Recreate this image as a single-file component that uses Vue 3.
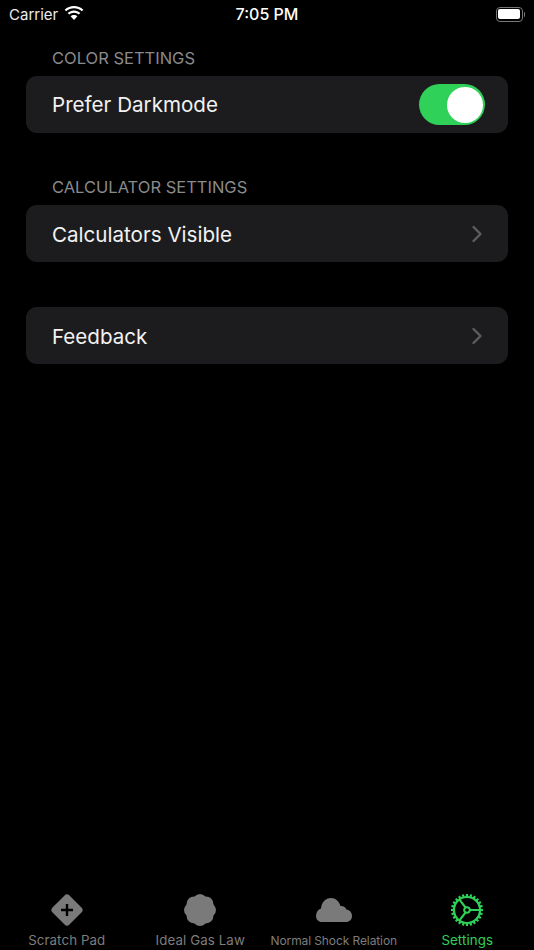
<script setup>
const cx = 17, cy = 17
function polar(r, deg) {
  const a = (deg - 90) * Math.PI / 180
  return `${(cx + r * Math.cos(a)).toFixed(2)} ${(cy + r * Math.sin(a)).toFixed(2)}`
}
const badge = (() => {
  const n = 8
  let d = `M${polar(14.6, -22.5)} `
  for (let i = 0; i < n; i++) {
    const a = i * 45
    d += `Q${polar(18.6, a)} ${polar(14.6, a + 22.5)} `
  }
  return d + 'Z'
})()
const teeth = Array.from({ length: 24 }, (_, i) => i * 15)
const tabs = [
  { label: 'Scratch Pad', icon: 'plus' },
  { label: 'Ideal Gas Law', icon: 'badge' },
  { label: 'Normal Shock Relation', icon: 'cloud', narrow: true },
  { label: 'Settings', icon: 'gear', active: true }
]
</script>

<template>
  <div class="screen">
    <header class="status">
      <div class="status-left">
        <span>Carrier</span>
        <svg class="wifi" viewBox="0 0 20 15" width="20" height="15">
          <path d="M10 2.200c3 0 5.800 1.100 7.900 3.100l1.400-1.600C16.800 1.300 13.500 0 10 0S3.200 1.300.7 3.700l1.400 1.600C4.200 3.300 7 2.200 10 2.200z" fill="#fff"/>
          <path d="M10 6.700c1.800 0 3.500.7 4.800 1.900l1.500-1.600C14.600 5.400 12.400 4.500 10 4.500s-4.600.9-6.300 2.500l1.500 1.600C6.500 7.400 8.200 6.700 10 6.700z" fill="#fff"/>
          <path d="M10 9c-1.300 0-2.500.5-3.400 1.300L10 14l3.400-3.700C12.500 9.500 11.300 9 10 9z" fill="#fff"/>
        </svg>
      </div>
      <span class="time">7:05 PM</span>
      <div class="battery">
        <div class="battery-body"><div class="battery-fill"></div></div>
        <div class="battery-cap"></div>
      </div>
    </header>

    <main class="content">
      <section class="group first">
        <h2 class="label">COLOR SETTINGS</h2>
        <div class="card">
          <span>Prefer Darkmode</span>
          <div class="toggle"><div class="knob"></div></div>
        </div>
      </section>
      <section class="group second">
        <h2 class="label">CALCULATOR SETTINGS</h2>
        <div class="card nudged">
          <span>Calculators Visible</span>
          <svg class="chevron" viewBox="0 0 12 18" width="12" height="18">
            <path d="M2.500 2l7 7-7 7" fill="none" stroke="#5d5d61" stroke-width="2.400" stroke-linecap="round" stroke-linejoin="round"/>
          </svg>
        </div>
      </section>
      <section class="group third">
        <div class="card nudged">
          <span>Feedback</span>
          <svg class="chevron" viewBox="0 0 12 18" width="12" height="18">
            <path d="M2.500 2l7 7-7 7" fill="none" stroke="#5d5d61" stroke-width="2.400" stroke-linecap="round" stroke-linejoin="round"/>
          </svg>
        </div>
      </section>
    </main>

    <nav class="tabs">
      <div v-for="tab in tabs" :key="tab.label" class="tab" :class="{ active: tab.active }">
        <svg class="tab-icon" viewBox="0 0 34 34" width="34" height="34">
          <template v-if="tab.icon === 'plus'">
            <rect x="5" y="5" width="24" height="24" rx="3.500" transform="rotate(45 17 17)" fill="#7a7a7a"/>
            <path d="M17 11v12M11 17h12" stroke="#000" stroke-width="2.400" fill="none"/>
          </template>
          <path v-else-if="tab.icon === 'badge'" :d="badge" fill="#7a7a7a"/>
          <path v-else-if="tab.icon === 'cloud'" d="M5 29H29C32.500 29 35 26.500 35 23C35 19.500 32.500 16.800 29.500 16.500C28.500 14 26 12.600 23.500 13C22 8 18.500 5 14 5C8.500 5 4.500 9.500 4 15.500C1 16.500-1 19.500-1 23C-1 26.500 1.500 29 5 29Z" fill="#7a7a7a"/>
          <g v-else fill="none" stroke="#30d158">
            <circle cx="17" cy="17" r="13" stroke-width="2.200"/>
            <line v-for="t in teeth" :key="t" x1="17" y1="1" x2="17" y2="4" stroke-width="2.200" :transform="`rotate(${t} 17 17)`"/>
            <circle cx="17" cy="17" r="2.800" stroke-width="2"/>
            <path d="M19.800 17H30M15.600 14.600L9.300 6.300M15.600 19.400L9.300 27.700" stroke-width="2.200"/>
          </g>
        </svg>
        <span class="tab-label" :class="{ narrow: tab.narrow }">{{ tab.label }}</span>
      </div>
    </nav>
  </div>
</template>

<style scoped>
.screen {
  width: 534px;
  height: 950px;
  background: #000;
  color: #fff;
  display: flex;
  flex-direction: column;
  overflow: hidden;
  font-family: Inter, "Liberation Sans", sans-serif;
}
.status {
  height: 28px;
  display: grid;
  grid-template-columns: 1fr auto 1fr;
  align-items: center;
  padding: 0 9px 0 9px;
  font-size: 15px;
  flex: none;
}
.status-left {
  display: flex;
  align-items: center;
  gap: 6px;
  color: #ececec;
}
.wifi { margin-top: -1px; }
.time { font-weight: 500; font-size: 16px; }
.battery {
  justify-self: end;
  display: flex;
  align-items: center;
  gap: 1px;
}
.battery-body {
  width: 27px;
  height: 15px;
  border: 1px solid #777;
  border-radius: 4px;
  padding: 1.500px;
  box-sizing: border-box;
}
.battery-fill {
  height: 100%;
  background: #fff;
  border-radius: 2px;
}
.battery-cap {
  width: 1.500px;
  height: 5px;
  background: #777;
  border-radius: 0 1px 1px 0;
}
.content {
  flex: 1;
  padding: 0 26px;
}
.first { margin-top: 20px; }
.second { margin-top: 44px; }
.third { margin-top: 45px; }
.label {
  margin: 0 0 8px 26px;
  font-size: 16.500px;
  line-height: 20px;
  font-weight: 400;
  color: #8a8a8c;
}
.card {
  height: 57px;
  box-sizing: border-box;
  background: #1c1c1e;
  border-radius: 11px;
  display: flex;
  align-items: center;
  justify-content: space-between;
  padding: 0 23px 0 26px;
  font-size: 20.600px;
  color: #f2f2f2;
}
.card.nudged { padding-top: 1px; }
.toggle {
  width: 66px;
  height: 41px;
  border-radius: 21px;
  background: #30d158;
  position: relative;
}
.knob {
  position: absolute;
  right: 2px;
  top: 2.500px;
  width: 36px;
  height: 36px;
  border-radius: 50%;
  background: #fff;
}
.chevron { margin-right: 2px; }
.tabs {
  flex: none;
  height: 65px;
  display: grid;
  grid-template-columns: repeat(4, 1fr);
}
.tab {
  display: flex;
  flex-direction: column;
  align-items: center;
  padding-top: 8px;
  color: #7d7d7d;
}
.tab.active { color: #30d158; }
.tab-icon { flex: none; overflow: visible; }
.tab-label {
  font-size: 13.300px;
  line-height: 15px;
  letter-spacing: 0.1px;
  margin-top: 6px;
  white-space: nowrap;
}
.tab-label.narrow {
  font-size: 12px;
  letter-spacing: -0.100px;
}
</style>
